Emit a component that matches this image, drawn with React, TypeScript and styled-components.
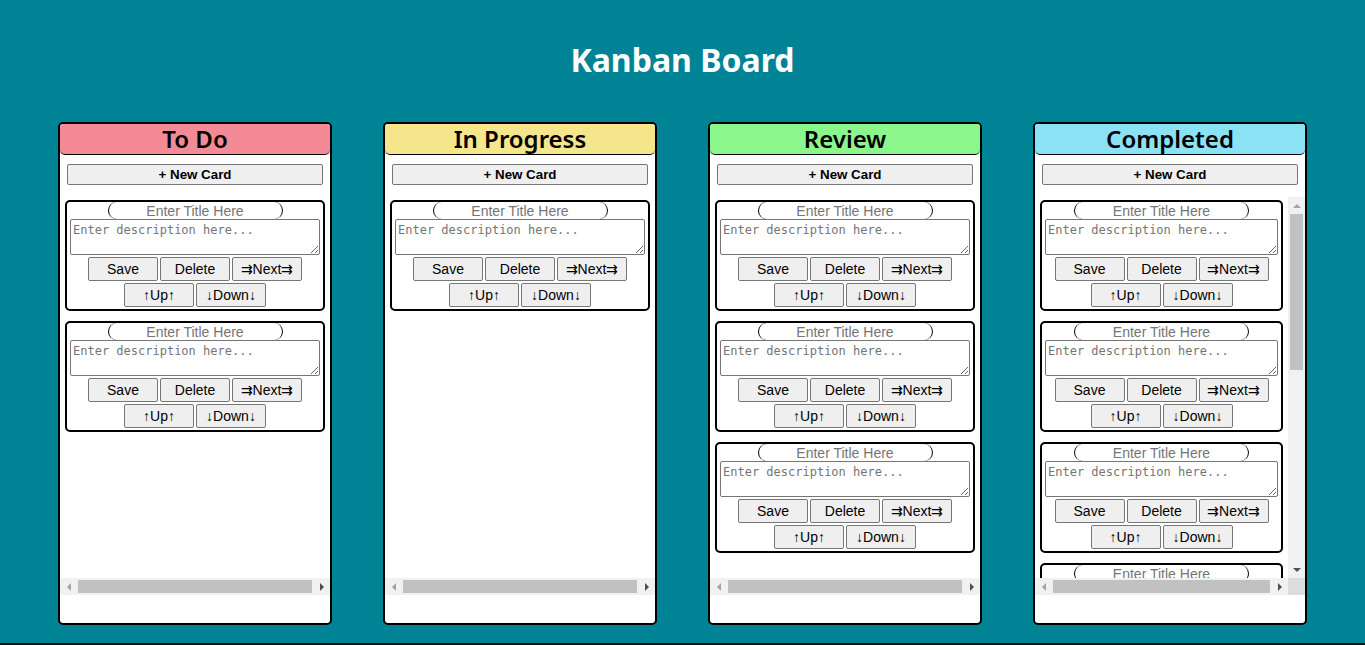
import styled, { createGlobalStyle } from 'styled-components';

const GlobalStyle = createGlobalStyle`
  body {
    margin: 0;
    background: #008394;
    font-family: 'Liberation Sans', Arial, sans-serif;
  }
  * {
    box-sizing: border-box;
  }
`;

interface ColumnData {
  title: string;
  color: string;
  cards: number;
  vertical?: boolean;
}

const columns: ColumnData[] = [
  { title: 'To Do', color: '#f38a95', cards: 2 },
  { title: 'In Progress', color: '#f5e58b', cards: 1 },
  { title: 'Review', color: '#8af68b', cards: 3 },
  { title: 'Completed', color: '#8ae2f4', cards: 4, vertical: true },
];

const TaskCard = () => (
  <Card>
    <TitleInput placeholder="Enter Title Here" />
    <Description placeholder="Enter description here..." rows={2} />
    <ButtonRow>
      <CardButton>Save</CardButton>
      <CardButton>Delete</CardButton>
      <CardButton>⇉Next⇉</CardButton>
    </ButtonRow>
    <ButtonRow>
      <CardButton>↑Up↑</CardButton>
      <CardButton>↓Down↓</CardButton>
    </ButtonRow>
  </Card>
);

const Column = ({ title, color, cards, vertical }: ColumnData) => (
  <ColumnBox>
    <ColumnHeader $color={color}>{title}</ColumnHeader>
    <NewCardButton>+ New Card</NewCardButton>
    <ScrollBox $vertical={!!vertical}>
      <Viewport>
        <CardList>
          {Array.from({ length: cards }).map((_, i) => (
            <TaskCard key={i} />
          ))}
        </CardList>
      </Viewport>
      {vertical && (
        <VBar>
          <Arrow $dir="up" $dim />
          <VTrack>
            <VThumb />
          </VTrack>
          <Arrow $dir="down" />
        </VBar>
      )}
      <HBar>
        <Arrow $dir="left" $dim />
        <HThumb />
        <Arrow $dir="right" />
      </HBar>
      {vertical && <Corner />}
    </ScrollBox>
  </ColumnBox>
);

const App = () => {
  return (
    <Page>
      <GlobalStyle />
      <Title>Kanban Board</Title>
      <Board>
        {columns.map((c) => (
          <Column key={c.title} {...c} />
        ))}
      </Board>
      <BottomEdge />
    </Page>
  );
};

const Page = styled.div`
  min-height: 100vh;
  display: flex;
  flex-direction: column;
`;

const Title = styled.h1`
  margin: 0;
  padding-top: 40px;
  line-height: 40px;
  font-family: 'Noto Sans', sans-serif;
  font-size: 32px;
  font-weight: 700;
  color: #ffffff;
  text-align: center;
`;

const Board = styled.div`
  display: flex;
  justify-content: center;
  gap: 51px;
  margin-top: 42px;
`;

const ColumnBox = styled.div`
  width: 274px;
  height: 503px;
  border: 2px solid #000;
  border-radius: 5px;
  background: #fff;
  display: flex;
  flex-direction: column;
  overflow: hidden;
`;

const ColumnHeader = styled.h2<{ $color: string }>`
  margin: 0;
  height: 31px;
  line-height: 30px;
  background: ${(p) => p.$color};
  border-bottom: 1px solid #000;
  border-radius: 0 0 5px 5px;
  font-family: 'Noto Sans', sans-serif;
  font-size: 24px;
  font-weight: 600;
  text-align: center;
  color: #000;
`;

const NewCardButton = styled.button`
  margin: 9px 7px 0;
  height: 21px;
  padding: 0;
  font-family: 'Liberation Sans', Arial, sans-serif;
  font-size: 13.33px;
  font-weight: 700;
  background: #efefef;
  border: 1px solid #767676;
  border-radius: 2px;
  color: #000;
`;

const ScrollBox = styled.div<{ $vertical: boolean }>`
  margin-top: 12px;
  height: 398px;
  display: grid;
  grid-template-columns: ${(p) => (p.$vertical ? '1fr 17px' : '1fr')};
  grid-template-rows: 1fr 17px;
`;

const Viewport = styled.div`
  overflow: hidden;
  min-height: 0;
`;

const CardList = styled.div`
  display: flex;
  flex-direction: column;
  gap: 10px;
  padding: 3px 5px 0;
`;

const Card = styled.div`
  border: 2px solid #000;
  border-radius: 5px;
  padding: 0 3px 2px;
  display: flex;
  flex-direction: column;
  align-items: center;
`;

const TitleInput = styled.input`
  width: 175px;
  height: 17px;
  padding: 0;
  border: 1px solid #000;
  border-top: none;
  border-bottom: none;
  border-radius: 10px;
  font-family: 'Liberation Sans', Arial, sans-serif;
  font-size: 14px;
  text-align: center;
  background: #fff;
  &::placeholder {
    color: #757575;
  }
`;

const Description = styled.textarea`
  width: 100%;
  height: 36px;
  padding: 3px 2px 2px;
  border: 1px solid #767676;
  border-radius: 2px;
  font-family: 'DejaVu Sans Mono', monospace;
  font-size: 12px;
  resize: vertical;
  &::placeholder {
    color: #757575;
  }
`;

const ButtonRow = styled.div`
  display: flex;
  justify-content: center;
  gap: 2px;
  margin-top: 2px;
`;

const CardButton = styled.button`
  width: 70px;
  height: 24px;
  padding: 0;
  font-family: 'Liberation Sans', Arial, sans-serif;
  font-size: 14px;
  background: #efefef;
  border: 1px solid #767676;
  border-radius: 2px;
  color: #000;
`;

const HBar = styled.div`
  display: flex;
  align-items: center;
  background: #f1f1f1;
`;

const HThumb = styled.div`
  flex: 1;
  height: 13px;
  margin: 0 1px;
  background: #c1c1c1;
`;

const VBar = styled.div`
  display: flex;
  flex-direction: column;
  align-items: center;
  background: #f1f1f1;
`;

const VTrack = styled.div`
  flex: 1;
  width: 100%;
  padding: 0 2px;
`;

const VThumb = styled.div`
  height: 156px;
  background: #c1c1c1;
`;

const Corner = styled.div`
  background: #dcdcdc;
`;

const Arrow = styled.div<{ $dir: 'up' | 'down' | 'left' | 'right'; $dim?: boolean }>`
  flex: none;
  width: 17px;
  height: 17px;
  display: flex;
  align-items: center;
  justify-content: center;
  &::after {
    content: '';
    width: 0;
    height: 0;
    border: 4px solid transparent;
    ${(p) => {
      const c = p.$dim ? '#a3a3a3' : '#505050';
      switch (p.$dir) {
        case 'up':
          return `border-bottom-color: ${c}; border-top-width: 0;`;
        case 'down':
          return `border-top-color: ${c}; border-bottom-width: 0;`;
        case 'left':
          return `border-right-color: ${c}; border-left-width: 0;`;
        default:
          return `border-left-color: ${c}; border-right-width: 0;`;
      }
    }}
  }
`;

const BottomEdge = styled.div`
  margin-top: auto;
  height: 2px;
  background: #111;
`;

export default App;
